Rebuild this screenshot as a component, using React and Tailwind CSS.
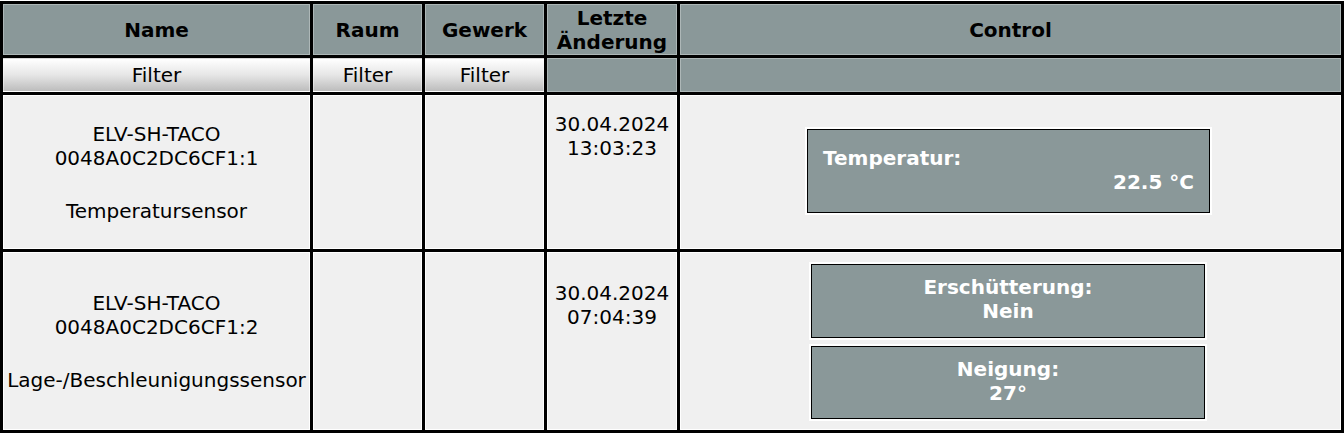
// App.jsx - Geräteliste mit Sensorwerten
const font = { fontFamily: '"DejaVu Sans", Verdana, sans-serif' }

const devices = [
  {
    id: 1,
    name: 'ELV-SH-TACO',
    address: '0048A0C2DC6CF1:1',
    type: 'Temperatursensor',
    date: '30.04.2024',
    time: '13:03:23',
  },
  {
    id: 2,
    name: 'ELV-SH-TACO',
    address: '0048A0C2DC6CF1:2',
    type: 'Lage-/Beschleunigungssensor',
    date: '30.04.2024',
    time: '07:04:39',
  },
]

function HeadCell({ children }) {
  return (
    <div className="bg-[#8a9899] border border-white/30 flex items-center justify-center text-center font-bold text-[20px] leading-[24px] text-black">
      {children}
    </div>
  )
}

function FilterCell() {
  return (
    <div className="border border-white/40 bg-gradient-to-b from-white via-[#e6e6e6] to-[#bdbdbd] flex items-center justify-center text-[20px] leading-[24px] text-black">
      Filter
    </div>
  )
}

function BodyCell({ children, className = '' }) {
  return (
    <div className={`bg-[#f0f0f0] border border-white overflow-hidden ${className}`}>
      {children}
    </div>
  )
}

function NameCell({ device }) {
  return (
    <BodyCell className="flex items-center justify-center">
      <div className="text-center text-[20px] leading-[24px] text-black whitespace-nowrap">
        <div>{device.name}</div>
        <div>{device.address}</div>
        <div className="mt-[29px]">{device.type}</div>
      </div>
    </BodyCell>
  )
}

function DateCell({ device }) {
  return (
    <BodyCell className="flex items-center justify-center">
      <div className="text-center text-[20px] leading-[24px] text-black pb-[72px]">
        <div>{device.date}</div>
        <div>{device.time}</div>
      </div>
    </BodyCell>
  )
}

function ValueBox({ children, className = '' }) {
  return (
    <div
      className={`bg-[#8a9899] border border-black shadow-[0_0_0_2px_#ffffff] text-white font-bold text-[20px] leading-[24px] ${className}`}
    >
      {children}
    </div>
  )
}

export default function App() {
  return (
    <div className="w-[1344px] h-[434px] bg-white pt-px" style={font}>
      <div className="grid grid-cols-[307px_109px_119px_130px_1fr] grid-rows-[51px_34px_154px_178px] gap-[3px] p-[3px] bg-black">
        <HeadCell>Name</HeadCell>
        <HeadCell>Raum</HeadCell>
        <HeadCell>Gewerk</HeadCell>
        <HeadCell>
          Letzte
          <br />
          Änderung
        </HeadCell>
        <HeadCell>Control</HeadCell>

        <FilterCell />
        <FilterCell />
        <FilterCell />
        <div className="bg-[#8a9899] border border-white/30" />
        <div className="bg-[#8a9899] border border-white/30" />

        {/* Temperatursensor */}
        <NameCell device={devices[0]} />
        <BodyCell />
        <BodyCell />
        <DateCell device={devices[0]} />
        <BodyCell className="flex items-center justify-center pr-[4px]">
          <ValueBox className="w-[403px] h-[84px] px-[15px] pt-[16px] mt-[-2px]">
            <div>Temperatur:</div>
            <div className="text-right">22.5 °C</div>
          </ValueBox>
        </BodyCell>

        {/* Lage-/Beschleunigungssensor */}
        <NameCell device={devices[1]} />
        <BodyCell />
        <BodyCell />
        <DateCell device={devices[1]} />
        <BodyCell className="flex flex-col items-center justify-center gap-[8px] pr-[5px]">
          <ValueBox className="w-[394px] h-[74px] pt-[10px] text-center">
            <div>Erschütterung:</div>
            <div>Nein</div>
          </ValueBox>
          <ValueBox className="w-[394px] h-[73px] pt-[10px] text-center">
            <div>Neigung:</div>
            <div>27°</div>
          </ValueBox>
        </BodyCell>
      </div>
    </div>
  )
}
